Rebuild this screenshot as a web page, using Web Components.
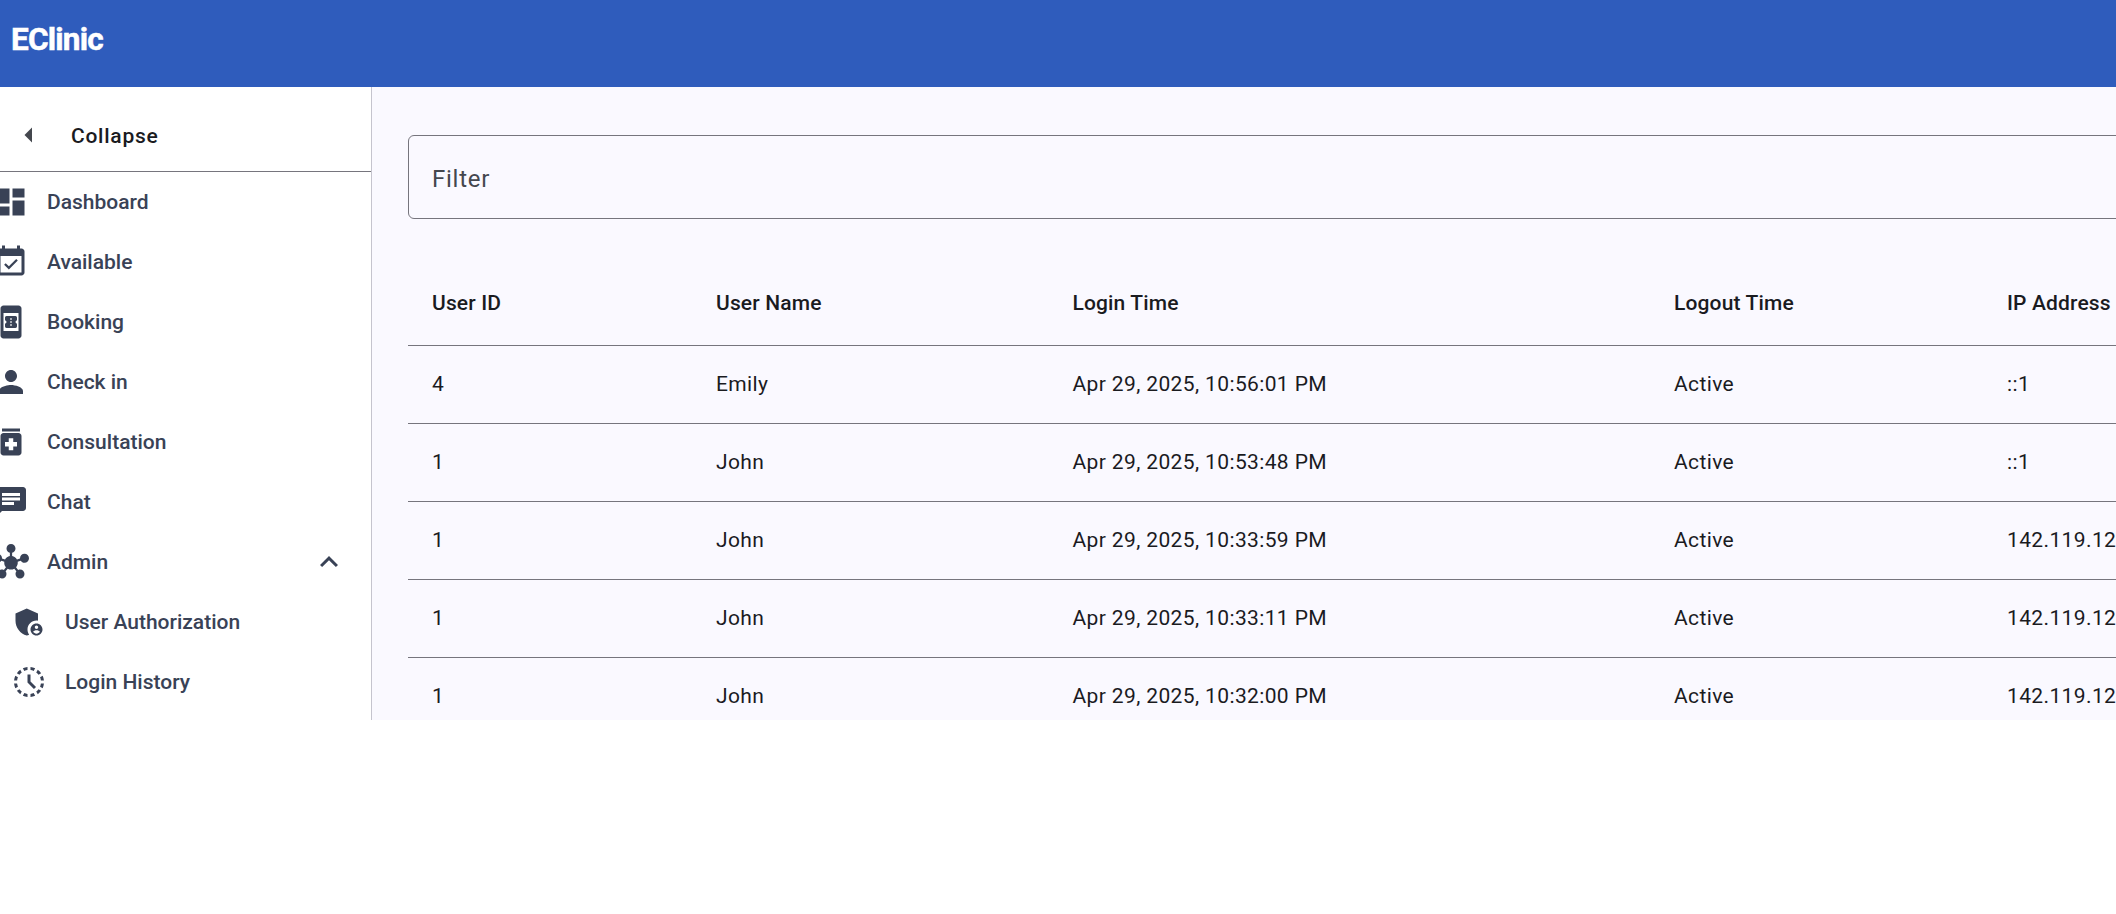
<!DOCTYPE html>
<html lang="en">
<head>
<meta charset="utf-8">
<title>EClinic</title>
<style>
html,body{margin:0;height:100%;background:#fff;overflow:hidden}
body{font-family:Roboto,"Liberation Sans",sans-serif;font-size:21px;color:#1a1b1f}
</style>
</head>
<body>
<clinic-app></clinic-app>
<script>
const ICONS = {
  left: 'M14 7l-5 5 5 5V7z',
  up: 'M12 8l-6 6 1.41 1.41L12 10.83l4.59 4.58L18 14z',
  dashboard: 'M3 13h8V3H3v10zm0 8h8v-6H3v6zm10 0h8V11h-8v10zm0-18v6h8V3h-8z',
  available: 'M16.53 11.06L15.47 10l-4.88 4.88-2.12-2.12-1.06 1.06L10.59 17l5.94-5.94zM19 3h-1V1h-2v2H8V1H6v2H5c-1.11 0-1.99.9-1.99 2L3 19c0 1.1.89 2 2 2h14c1.1 0 2-.9 2-2V5c0-1.1-.9-2-2-2zm0 16H5V8h14v11z',
  booking: 'M17 1H7c-1.1 0-2 .9-2 2v18c0 1.1.9 2 2 2h10c1.1 0 2-.9 2-2V3c0-1.1-.9-2-2-2zM7 18V6h10v12H7zm9-7V9.14C16 8.51 15.55 8 15 8H9c-.55 0-.99.51-.99 1.14V11c.55 0 .99.45.99 1s-.45 1-1 1v1.86c0 .63.45 1.14 1 1.14h6c.55 0 1-.51 1-1.14V13c-.55 0-1-.45-1-1s.45-1 1-1zm-3.5 3.5h-1v-1h1v1zm0-2h-1v-1h1v1zm0-2h-1v-1h1v1z',
  person: 'M12 12c2.21 0 4-1.79 4-4s-1.79-4-4-4-4 1.79-4 4 1.79 4 4 4zm0 2c-2.67 0-8 1.34-8 4v2h16v-2c0-2.66-5.33-4-8-4z',
  medication: 'M6 3h12v2H6zM17 6H7c-1.1 0-2 .9-2 2v11c0 1.1.9 2 2 2h10c1.1 0 2-.9 2-2V8c0-1.1-.9-2-2-2zm-1 9h-2.5v2.5h-3V15H8v-3h2.5V9.5h3V12H16v3z',
  chat: 'M20 2H4c-1.1 0-1.99.9-1.99 2L2 22l4-4h14c1.1 0 2-.9 2-2V4c0-1.1-.9-2-2-2zM6 9h12v2H6V9zm8 5H6v-2h8v2zm4-6H6V6h12v2z',
  hub: 'M8.4 18.2C8.78 18.7 9 19.32 9 20c0 1.66-1.34 3-3 3s-3-1.34-3-3 1.34-3 3-3c.44 0 .85.09 1.23.26l1.41-1.77c-.92-1.03-1.29-2.39-1.09-3.69l-2.03-.68C4.98 11.95 4.06 12.5 3 12.5c-1.66 0-3-1.34-3-3s1.34-3 3-3 3 1.34 3 3c0 .07 0 .14-.01.21l2.03.68c.64-1.21 1.82-2.09 3.22-2.32V5.91C9.96 5.57 9 4.4 9 3c0-1.66 1.34-3 3-3s3 1.34 3 3c0 1.4-.96 2.57-2.25 2.91v2.16c1.4.23 2.58 1.11 3.22 2.32l2.03-.68C18 9.64 18 9.57 18 9.5c0-1.66 1.34-3 3-3s3 1.34 3 3-1.34 3-3 3c-1.06 0-1.98-.55-2.52-1.37l-2.03.68c.2 1.29-.16 2.65-1.09 3.69l1.41 1.77C17.15 17.09 17.56 17 18 17c1.66 0 3 1.34 3 3s-1.34 3-3 3-3-1.34-3-3c0-.68.22-1.3.6-1.8l-1.41-1.77c-1.35.75-3.01.76-4.37 0L8.4 18.2z',
  admin: 'M17 11c.34 0 .67.04 1 .09V6.27L10.5 3 3 6.27v4.91c0 4.54 3.2 8.79 7.5 9.82.55-.13 1.08-.32 1.6-.55-.69-.98-1.1-2.17-1.1-3.45 0-3.31 2.69-6 6-6zM17 13c-2.21 0-4 1.79-4 4s1.79 4 4 4 4-1.79 4-4-1.79-4-4-4zm0 1.38c.62 0 1.12.51 1.12 1.12s-.51 1.12-1.12 1.12-1.12-.51-1.12-1.12.5-1.12 1.12-1.12zm0 5.37c-.93 0-1.74-.46-2.24-1.17.05-.72 1.51-1.08 2.24-1.08s2.19.36 2.24 1.08c-.5.71-1.31 1.17-2.24 1.17z',
  history: 'M15.1 19.37l1 1.74c-.96.44-2.01.73-3.1.84v-2.02c.74-.09 1.44-.28 2.1-.56zM4.07 13H2.05c.11 1.1.4 2.14.84 3.1l1.74-1c-.28-.66-.47-1.36-.56-2.1zM15.1 4.63l1-1.74c-.96-.44-2-.73-3.1-.84v2.02c.74.09 1.44.28 2.1.56zM19.93 11h2.02c-.11-1.1-.4-2.14-.84-3.1l-1.74 1c.28.66.47 1.36.56 2.1zM8.9 19.37l-1 1.74c.96.44 2.01.73 3.1.84v-2.02c-.74-.09-1.44-.28-2.1-.56zM11 4.07V2.05c-1.1.11-2.14.4-3.1.84l1 1.74c.66-.28 1.36-.47 2.1-.56zM18.36 7.17l1.74-1.01c-.63-.87-1.4-1.64-2.27-2.27l-1.01 1.74c.59.45 1.1.96 1.54 1.54zM4.63 8.9l-1.74-1c-.44.96-.73 2-.84 3.1h2.02c.09-.74.28-1.44.56-2.1zM19.93 13c-.09.74-.28 1.44-.56 2.1l1.74 1c.44-.96.73-2.01.84-3.1h-2.02zM16.83 18.36l1.01 1.74c.87-.63 1.64-1.4 2.27-2.27l-1.74-1.01c-.45.59-.96 1.1-1.54 1.54zM7.17 5.64L6.17 3.89c-.87.63-1.64 1.4-2.27 2.27l1.74 1.01c.44-.58.95-1.09 1.53-1.53zM5.64 16.83l-1.74 1c.63.87 1.4 1.64 2.27 2.27l1.01-1.74c-.59-.44-1.1-.95-1.54-1.53zM13 7h-2v5.41l4.29 4.29 1.41-1.41-3.7-3.7V7z'
};

function define(name, render) {
  customElements.define(name, class extends HTMLElement {
    constructor() { super(); this.attachShadow({ mode: 'open' }); }
    connectedCallback() { this.shadowRoot.innerHTML = render(this); }
  });
}

define('mat-glyph', el => `
<style>:host{display:block;flex:none;width:36px;height:36px}svg{display:block;width:36px;height:36px;fill:currentColor}</style>
<svg viewBox="0 0 24 24"><path d="${ICONS[el.getAttribute('name')]}"/></svg>`);

define('app-bar', () => `
<style>
:host{display:block;height:87px;box-sizing:border-box;padding:21px 0 0 11px;background:#2f5cbc;color:#fff;font-weight:700;font-size:31.5px;line-height:37px;letter-spacing:-.8px;-webkit-text-stroke:.5px #fff}
</style><slot></slot>`);

define('nav-item', el => `
<style>
:host{display:flex;align-items:center;height:60px;color:#394256;font-weight:500}
:host([sub]){padding-left:18px}
.lead{margin-left:-7px;margin-right:18px}
.label{flex:1}
.end{margin-right:24px}
</style>
<mat-glyph class="lead" name="${el.getAttribute('icon')}"></mat-glyph>
<span class="label"><slot></slot></span>
${el.hasAttribute('open') ? '<mat-glyph class="end" name="up"></mat-glyph>' : ''}`);

define('side-nav', () => `
<style>
:host{display:block;width:371px;flex:none;border-right:1px solid #c5c4ce;background:#fff}
.collapse{display:flex;align-items:center;height:84px;border-bottom:1px solid #76757d;font-weight:500;letter-spacing:.75px}
.collapse mat-glyph{margin:12px 24px 0 11px;color:#44474e}
.collapse span{margin-top:14px}
</style>
<div class="collapse"><mat-glyph name="left"></mat-glyph><span>Collapse</span></div>
<nav>
<nav-item icon="dashboard">Dashboard</nav-item>
<nav-item icon="available">Available</nav-item>
<nav-item icon="booking">Booking</nav-item>
<nav-item icon="person">Check in</nav-item>
<nav-item icon="medication">Consultation</nav-item>
<nav-item icon="chat">Chat</nav-item>
<nav-item icon="hub" open>Admin</nav-item>
<nav-item icon="admin" sub>User Authorization</nav-item>
<nav-item icon="history" sub>Login History</nav-item>
</nav>`);

define('filter-field', () => `
<style>
:host{display:flex;align-items:center;box-sizing:border-box;width:1760px;height:84px;border:1px solid #76757d;border-radius:6px;padding:4px 23px 0;font-size:24px;letter-spacing:.75px;color:#44474e}
</style><slot></slot>`);

define('table-row', el => `
<style>
:host{display:grid;grid-template-columns:284px 356.5px 601.5px 333px 220px;width:1795px;height:78px;box-sizing:border-box;border-bottom:1px solid #76757d;align-items:center;letter-spacing:.375px;padding-bottom:2px}
:host([head]){height:84px;font-weight:500;letter-spacing:.15px}
span{padding-left:24px;white-space:nowrap}
</style>
${el.getAttribute('cells').split('|').map(c => `<span>${c}</span>`).join('')}`);

define('login-history', () => `
<style>
:host{display:block;flex:1;min-width:0;overflow:hidden;background:#faf9ff;padding:48px 0 0 36px}
filter-field{margin-bottom:43px}
</style>
<filter-field>Filter</filter-field>
<table-row head cells="User ID|User Name|Login Time|Logout Time|IP Address"></table-row>
<table-row cells="4|Emily|Apr 29, 2025, 10:56:01 PM|Active|::1"></table-row>
<table-row cells="1|John|Apr 29, 2025, 10:53:48 PM|Active|::1"></table-row>
<table-row cells="1|John|Apr 29, 2025, 10:33:59 PM|Active|142.119.12"></table-row>
<table-row cells="1|John|Apr 29, 2025, 10:33:11 PM|Active|142.119.12"></table-row>
<table-row cells="1|John|Apr 29, 2025, 10:32:00 PM|Active|142.119.12"></table-row>`);

define('clinic-app', () => `
<style>
:host{display:flex;flex-direction:column;height:720px;overflow:hidden}
main{display:flex;height:633px;overflow:hidden}
</style>
<app-bar>EClinic</app-bar>
<main><side-nav></side-nav><login-history></login-history></main>`);
</script>
</body>
</html>
